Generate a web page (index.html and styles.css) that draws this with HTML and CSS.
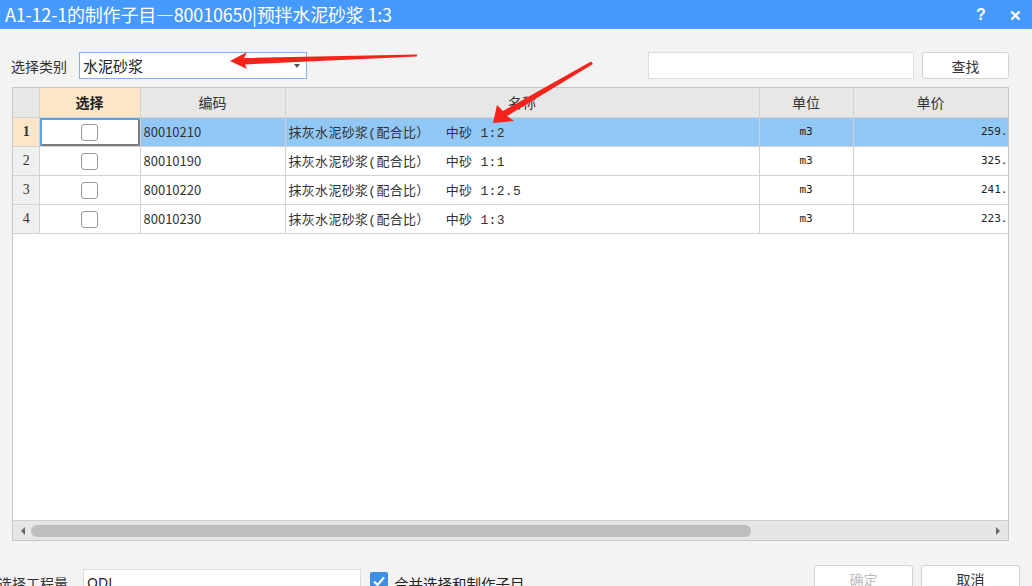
FILE: index.html
```html
<!DOCTYPE html>
<html lang="zh">
<head>
<meta charset="utf-8">
<title>制作子目</title>
<link rel="stylesheet" href="styles.css">
</head>
<body>
<div class="titlebar">
  <div class="title">A1-12-1的制作子目—80010650|预拌水泥砂浆 1:3</div>
  <div class="tb-btns"><span class="help">?</span><span class="close">✕</span></div>
</div>

<div class="toolbar">
  <label class="lbl">选择类别</label>
  <div class="combo"><span>水泥砂浆</span><span class="caret"></span></div>
  <div class="spacer"></div>
  <div class="search"></div>
  <button class="btn find">查找</button>
</div>

<div class="grid">
  <div class="grid-body">
    <table class="tbl">
      <colgroup>
        <col class="c-num"><col class="c-sel"><col class="c-code"><col class="c-name"><col class="c-unit"><col class="c-price">
      </colgroup>
      <thead>
        <tr><th></th><th class="sel-h">选择</th><th>编码</th><th>名称</th><th>单位</th><th>单价</th></tr>
      </thead>
      <tbody>
        <tr class="active"><td class="num cur">1</td><td class="chk focus"><span class="box"></span></td><td>80010210</td><td class="name">抹灰水泥砂浆(配合比）  中砂 1:2</td><td class="unit">m3</td><td class="price">259.</td></tr>
        <tr><td class="num">2</td><td class="chk"><span class="box"></span></td><td>80010190</td><td class="name">抹灰水泥砂浆(配合比）  中砂 1:1</td><td class="unit">m3</td><td class="price">325.</td></tr>
        <tr><td class="num">3</td><td class="chk"><span class="box"></span></td><td>80010220</td><td class="name">抹灰水泥砂浆(配合比）  中砂 1:2.5</td><td class="unit">m3</td><td class="price">241.</td></tr>
        <tr><td class="num">4</td><td class="chk"><span class="box"></span></td><td>80010230</td><td class="name">抹灰水泥砂浆(配合比）  中砂 1:3</td><td class="unit">m3</td><td class="price">223.</td></tr>
      </tbody>
    </table>
  </div>
  <div class="hscroll">
    <span class="arr left"></span>
    <div class="track"><div class="thumb"></div></div>
    <span class="arr right"></span>
  </div>
</div>

<div class="bottom">
  <label class="lbl qty">选择工程量</label>
  <div class="qinput">QDL</div>
  <span class="cbox"><svg viewBox="0 0 18 18" width="18" height="18"><path d="M4 9.5 L7.5 13 L14 5.5" fill="none" stroke="#fff" stroke-width="2.2"/></svg></span>
  <span class="cb-text">合并选择和制作子目</span>
  <div class="spacer"></div>
  <button class="btn ok">确定</button>
  <button class="btn cancel">取消</button>
</div>

<svg class="arrows" width="1032" height="586" viewBox="0 0 1032 586">
  <polygon points="230,61 247,52 244,58 417,54.5 417,56.5 245,64.5 247,69" fill="#f5231b"/>
  <polygon points="493,123 497,105 503,111 591,61.5 593,64 507,116 514,121" fill="#f5231b"/>
</svg>
</body>
</html>
```

FILE: styles.css
```css
* { box-sizing: border-box; }
html, body { margin: 0; padding: 0; }
body {
  width: 1032px;
  height: 586px;
  overflow: hidden;
  background: #f3f3f3;
  font-family: "Noto Sans CJK SC", "Noto Sans", sans-serif;
  color: #222;
  position: relative;
}
.titlebar {
  height: 29px;
  background: #4699fd;
  color: #fff;
  display: flex;
  align-items: center;
  padding-left: 5px;
}
.title { font-size: 18px; line-height: 29px; letter-spacing: -0.2px; }
.tb-btns { margin-left: auto; display: flex; align-items: center; }
.help { font-size: 16px; font-weight: bold; font-family: "Liberation Sans", sans-serif; width: 30px; text-align: center; margin-right: 4px; }
.close { font-size: 15px; font-weight: bold; width: 30px; text-align: center; margin-right: 2px; }

.toolbar {
  display: flex;
  align-items: center;
  height: 27px;
  margin-top: 23px;
  padding-left: 11px;
  padding-right: 23px;
}
.lbl { font-size: 14px; color: #333; }
.toolbar .lbl { width: 68px; }
.combo {
  width: 228px;
  height: 27px;
  border: 1px solid #78b3f3;
  background: #fff;
  display: flex;
  align-items: center;
  padding-left: 3px;
  font-size: 15px;
  color: #222;
}
.caret {
  margin-left: auto;
  margin-right: 6px;
  width: 0; height: 0;
  border-left: 3.5px solid transparent;
  border-right: 3.5px solid transparent;
  border-top: 4px solid #555;
}
.spacer { flex: 1; }
.search {
  width: 266px;
  height: 27px;
  background: #fff;
  border: 1px solid #dcdcdc;
}
.btn {
  font-family: "Noto Sans CJK SC", sans-serif;
  background: #fff;
  border: 1px solid #d3d3d3;
  border-radius: 3px;
  font-size: 14px;
  color: #333;
  padding: 0;
}
.find { width: 87px; height: 27px; margin-left: 8px; }

.grid {
  margin-top: 8px;
  margin-left: 12px;
  width: 997px;
  height: 454px;
  border: 1px solid #c6c6c6;
  background: #fff;
  display: flex;
  flex-direction: column;
}
.grid-body { flex: 1; overflow: hidden; }
.tbl {
  border-collapse: collapse;
  table-layout: fixed;
  width: 995px;
}
.c-num { width: 26px; }
.c-sel { width: 101px; }
.c-code { width: 145px; }
.c-name { width: 474px; }
.c-unit { width: 94px; }
.c-price { width: 155px; }
.tbl th {
  height: 29px;
  background: #e7e7e7;
  border: 1px solid #d2d2d2;
  border-top: 0;
  font-weight: normal;
  font-size: 14px;
  color: #333;
  padding: 0;
}
.tbl th:first-child { border-left: 0; }
.tbl th.sel-h { background: #fde5c8; font-weight: bold; color: #222; }
.tbl td {
  height: 29px;
  border: 1px solid #d2d2d2;
  padding: 0 3px;
  font-size: 13px;
  color: #333;
  white-space: nowrap;
  overflow: hidden;
}
.tbl td:first-child { border-left: 0; }
.tbl tr.active td { background: #92c8f6; }
.tbl td.num {
  background: #f0f0f0;
  font-family: "Liberation Serif", serif;
  font-size: 14px;
  text-align: center;
  padding: 0 0 0 1px;
}
.tbl tr.active td.num.cur { background: #fde5c8; font-weight: bold; }
.tbl td.chk { text-align: center; background: #fff; }
.tbl tr.active td.chk.focus {
  background: #fff;
  box-shadow: inset 2px 2px 0 #5aa0ee, inset -2px -2px 0 #7c7c7c;
}
.box {
  display: inline-block;
  width: 17px; height: 17px;
  border: 1px solid #9a9a9a;
  border-radius: 3px;
  background: #fff;
  vertical-align: middle;
}
.tbl td.name {
  font-family: "Liberation Mono", "Noto Sans CJK SC", monospace;
  font-size: 13px;
  letter-spacing: 0.3px;
  padding-left: 3px;
  white-space: pre;
}
.tbl td.unit, .tbl td.price { font-family: "DejaVu Sans Mono", "Liberation Mono", monospace; font-size: 11px; color: #222; }
.tbl td.unit { text-align: center; }
.tbl td.price { text-align: right; padding-right: 0; }

.hscroll {
  height: 20px;
  border-top: 1px solid #cfcfcf;
  background: #e6e6e6;
  display: flex;
  align-items: center;
}
.arr { width: 16px; display: flex; justify-content: center; }
.arr.left::before {
  content: ""; border-top: 4px solid transparent; border-bottom: 4px solid transparent; border-right: 4px solid #666;
}
.arr.right::before {
  content: ""; border-top: 4px solid transparent; border-bottom: 4px solid transparent; border-left: 4px solid #666;
}
.arr.left { margin-left: 2px; }
.arr.right { margin-right: 2px; }
.track { flex: 1; height: 12px; }
.thumb { width: 720px; height: 12px; border-radius: 6px; background: #bebebe; }

.bottom {
  display: flex;
  align-items: flex-start;
  margin-top: 24px;
  padding-right: 12px;
  height: 30px;
}
.bottom .qty { margin-top: 8px; margin-left: -2px; width: 85px; font-size: 14px; }
.qinput {
  width: 278px; height: 28px;
  margin-top: 4px;
  background: #fff;
  border: 1px solid #dcdcdc;
  font-size: 14px;
  padding: 3px 3px;
  font-family: "Noto Sans", sans-serif;
}
.cbox {
  margin-left: 9px;
  margin-top: 7px;
  width: 18px; height: 18px;
  background: #3c8fe2;
  border-radius: 2px;
  display: flex;
}
.cb-text { margin-left: 6px; margin-top: 8px; font-size: 14.5px; color: #222; }
.ok, .cancel { width: 99px; height: 28px; }
.ok { color: #bbb; }
.cancel { margin-left: 8px; }

.arrows { position: absolute; left: 0; top: 0; pointer-events: none; }
```
